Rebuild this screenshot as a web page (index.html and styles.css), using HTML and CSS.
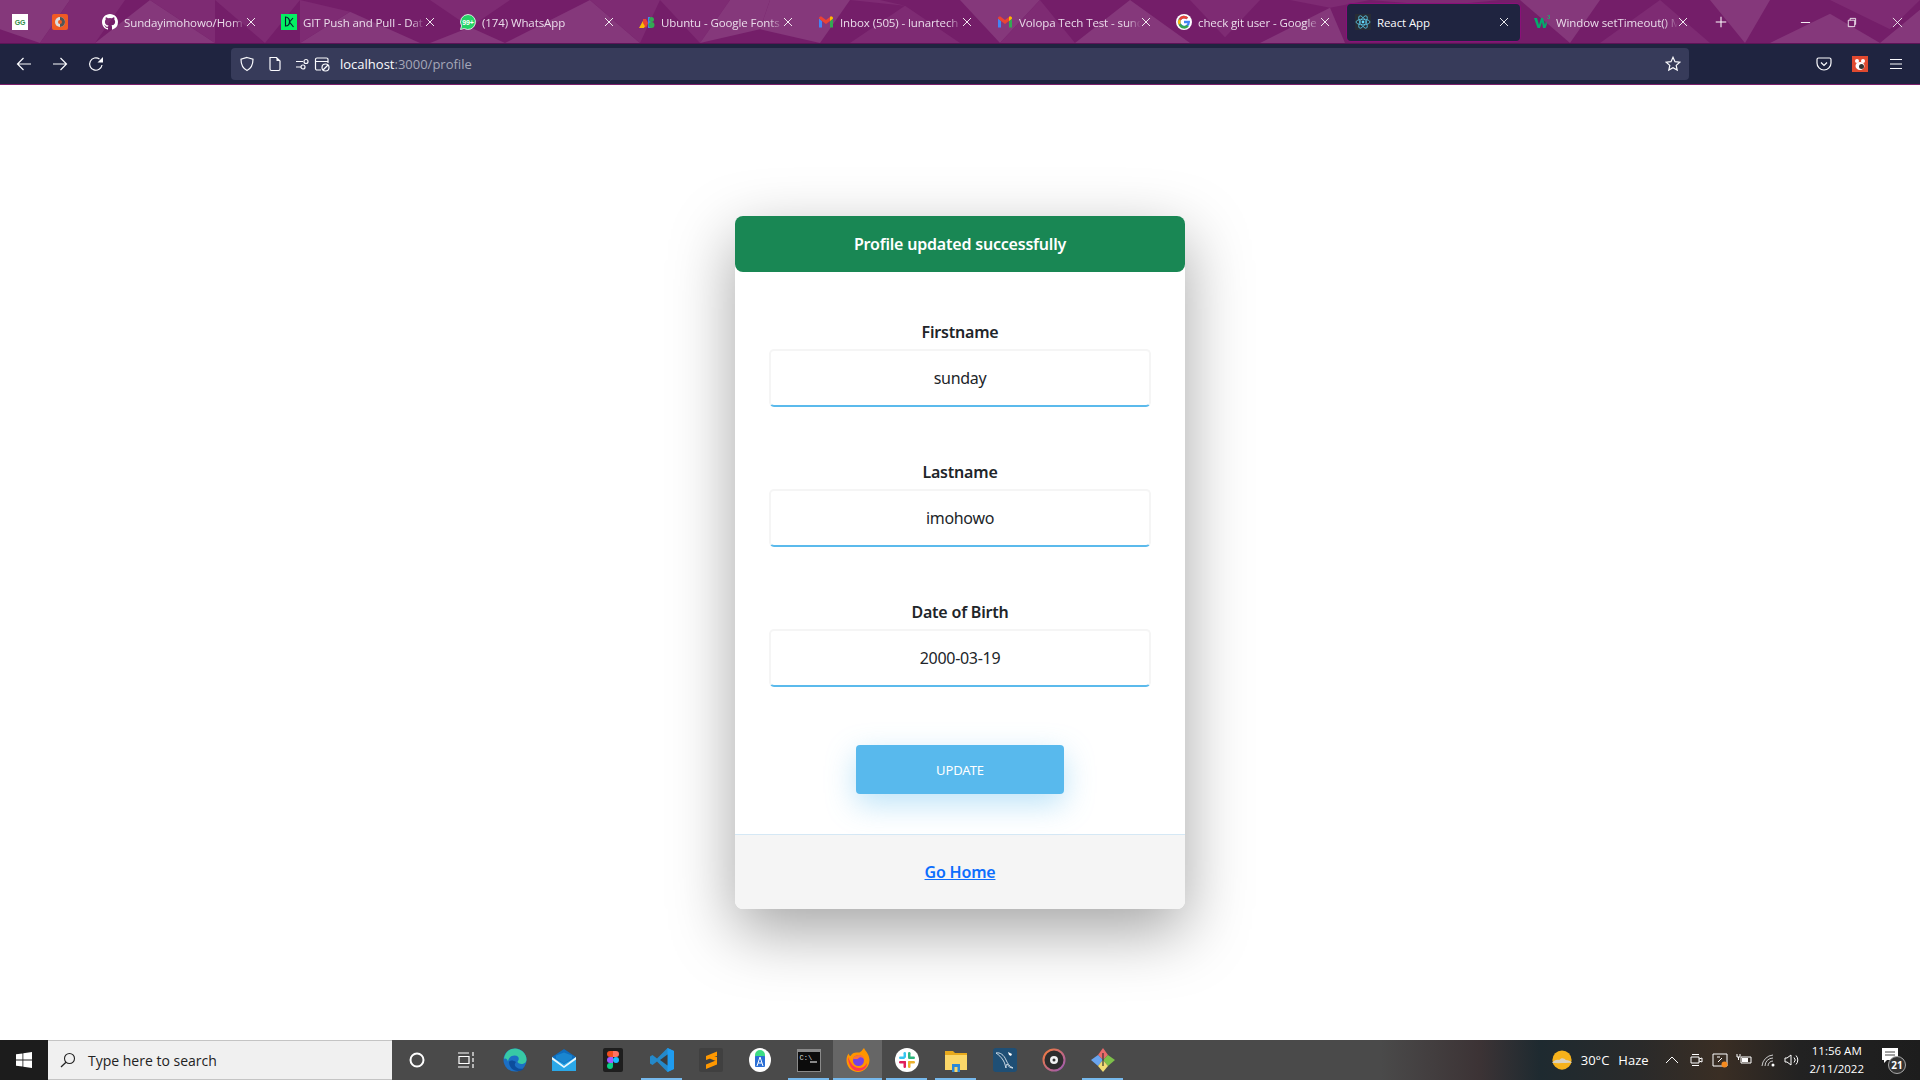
FILE: index.html
```html
<!DOCTYPE html>
<html>
<head>
    <title>React App</title>
    <link rel="stylesheet" href="styles.css">
</head>
<body>
    <svg class="sprites" width="0" height="0">
        <symbol id="tab-close" viewBox="0 0 10 10"><path d="M1 1l8 8M9 1L1 9" stroke="#fff" stroke-width=".9"/></symbol>
    </svg>
    <header class="browser">
        <div class="tabbar">
            <svg class="tabbar-art" viewBox="0 0 1920 44" preserveAspectRatio="none">
                <polygon class="lt" points="0,0 70,0 40,44 0,30"/>
                <polygon class="md" points="40,44 70,0 125,0 95,44"/>
                <polygon class="lt" points="95,44 150,0 215,44"/>
                <polygon class="md" points="150,0 215,0 215,44"/>
                <polygon class="md" points="215,0 300,0 265,44"/>
                <polygon class="lt" points="300,44 350,12 420,44"/>
                <polygon class="md" points="300,0 350,12 300,44"/>
                <polygon class="md" points="430,0 510,0 470,28"/>
                <polygon class="lt" points="430,44 470,28 505,44"/>
                <polygon class="lt" points="505,44 590,0 640,44"/>
                <polygon class="md" points="590,0 660,0 640,44"/>
                <polygon class="md" points="660,0 730,0 700,44"/>
                <polygon class="lt" points="700,44 730,0 770,0 760,30"/>
                <polygon class="lt" points="770,0 850,0 820,44 760,30"/>
                <polygon class="md" points="850,44 905,6 960,44"/>
                <polygon class="md" points="850,0 905,6 880,0"/>
                <polygon class="lt" points="960,0 1040,0 1000,44"/>
                <polygon class="md" points="1000,44 1040,0 1075,44"/>
                <polygon class="lt" points="1075,44 1130,0 1190,44"/>
                <polygon class="md" points="1190,0 1260,0 1225,38"/>
                <polygon class="lt" points="1260,44 1330,8 1345,44"/>
                <polygon class="md" points="1290,0 1370,0 1330,8"/>
                <polygon class="md" points="1370,0 1500,0 1440,6"/>
                <polygon class="lt" points="1520,0 1600,0 1570,44"/>
                <polygon class="md" points="1600,44 1660,0 1710,44"/>
                <polygon class="lt" points="1710,0 1770,0 1745,44"/>
                <polygon class="lt" points="1770,44 1830,14 1880,44"/>
                <polygon class="md" points="1830,0 1920,0 1890,30"/>
                <polygon class="lt" points="1880,44 1920,10 1920,44"/>
            </svg>
            <div class="tab tab-pinned">
                <svg class="fav" viewBox="0 0 16 16"><rect width="16" height="16" fill="#fff"/><text x="8" y="11" font-size="7" font-weight="700" text-anchor="middle" fill="#2f8d46" font-family="Liberation Sans">GG</text></svg>
            </div>
            <div class="tab tab-pinned">
                <svg class="fav" viewBox="0 0 16 16"><rect width="16" height="16" rx="2" fill="#f15a24"/><circle cx="8" cy="8" r="5" fill="#ddd"/><path d="M8 3a5 5 0 0 1 0 10z" fill="#555"/><circle cx="8" cy="8" r="2" fill="#f15a24"/></svg>
            </div>
            <div class="tab">
                <svg class="fav" viewBox="0 0 16 16"><path fill="#fff" d="M8 0C3.58 0 0 3.58 0 8c0 3.54 2.29 6.53 5.47 7.59.4.07.55-.17.55-.38v-1.34c-2.23.48-2.69-1.07-2.69-1.07-.36-.92-.89-1.17-.89-1.17-.73-.5.05-.49.05-.49.8.06 1.23.83 1.23.83.71 1.22 1.87.87 2.33.66.07-.52.28-.87.51-1.07-1.78-.2-3.64-.89-3.64-3.95 0-.87.31-1.59.82-2.15-.08-.2-.36-1.02.08-2.12 0 0 .67-.21 2.2.82a7.6 7.6 0 0 1 4 0c1.53-1.04 2.2-.82 2.2-.82.44 1.1.16 1.92.08 2.12.51.56.82 1.27.82 2.15 0 3.07-1.87 3.75-3.65 3.95.29.25.54.73.54 1.48v2.2c0 .21.15.46.55.38A8 8 0 0 0 16 8c0-4.42-3.58-8-8-8z"/></svg>
                <span class="tab-title">Sundayimohowo/Hom</span>
                <svg class="tab-x"><use href="#tab-close"/></svg>
            </div>
            <div class="tab">
                <svg class="fav" viewBox="0 0 16 16"><rect width="16" height="16" fill="#03ef62"/><path d="M4.500 3v9c3 0 4-2 4-4.500S7 3 4.500 3zM12 4L8.500 8l4 5" stroke="#05192d" stroke-width="1.100" fill="none"/></svg>
                <span class="tab-title">GIT Push and Pull - Dat</span>
                <svg class="tab-x"><use href="#tab-close"/></svg>
            </div>
            <div class="tab">
                <svg class="fav" viewBox="0 0 16 16"><path d="M8 .5a7.500 7.500 0 0 0-6.400 11.400L.5 15.500l3.700-1A7.500 7.500 0 1 0 8 .5z" fill="#25d366" stroke="#fff" stroke-width=".8"/><text x="8" y="10.500" font-size="7" font-weight="700" text-anchor="middle" fill="#fff" font-family="Liberation Sans">99+</text></svg>
                <span class="tab-title">(174) WhatsApp</span>
                <svg class="tab-x"><use href="#tab-close"/></svg>
            </div>
            <div class="tab">
                <svg class="fav" viewBox="0 0 16 16"><path d="M0 14L5 5l3 4-3 5z" fill="#fbbc04"/><path d="M5 5h3l2 4-2 5-3-5z" fill="#ea4335" transform="translate(-1)"/><path d="M9 3h2l2 11H9z" fill="#4285f4"/><circle cx="12.500" cy="5.500" r="2.500" fill="#34a853"/><circle cx="12.500" cy="11" r="3" fill="#34a853"/></svg>
                <span class="tab-title">Ubuntu - Google Fonts</span>
                <svg class="tab-x"><use href="#tab-close"/></svg>
            </div>
            <div class="tab">
                <svg class="fav" viewBox="0 0 16 16"><use href="#gmail"/></svg>
                <span class="tab-title">Inbox (505) - lunartech</span>
                <svg class="tab-x"><use href="#tab-close"/></svg>
            </div>
            <div class="tab">
                <svg class="fav" viewBox="0 0 16 16">
                    <g id="gmail">
                        <path d="M1 4.500V13.500h3V7z" fill="#4285f4"/>
                        <path d="M12 7v6.500h3V4.500z" fill="#34a853"/>
                        <path d="M1 4.500C1 2.500 3 2 4 3l4 3 4-3c1-1 3-.5 3 1.500L12 7 8 10 4 7z" fill="#ea4335"/>
                        <path d="M12 3l-0 4 3-2.500C15 2.500 13 2 12 3z" fill="#fbbc04"/>
                    </g>
                </svg>
                <span class="tab-title">Volopa Tech Test - sund</span>
                <svg class="tab-x"><use href="#tab-close"/></svg>
            </div>
            <div class="tab">
                <svg class="fav" viewBox="0 0 16 16"><circle cx="8" cy="8" r="8" fill="#fff"/><path d="M8 6.800v2.500h3.500A3.600 3.600 0 1 1 10.400 5.300l1.800-1.800A6.100 6.100 0 1 0 14 8c0-.4 0-.8-.1-1.200z" fill="#4285f4"/><path d="M2.700 5A6 6 0 0 1 12.200 3.500l-1.800 1.800A3.600 3.600 0 0 0 4.800 6.500z" fill="#ea4335"/><path d="M2.700 5l2.100 1.500a3.600 3.600 0 0 0 0 3L2.700 11a6 6 0 0 1 0-6z" fill="#fbbc04"/><path d="M2.700 11l2.100-1.500a3.600 3.600 0 0 0 6 1.400l2 1.600A6 6 0 0 1 2.700 11z" fill="#34a853"/></svg>
                <span class="tab-title">check git user - Google</span>
                <svg class="tab-x"><use href="#tab-close"/></svg>
            </div>
            <div class="tab tab-active">
                <svg class="fav" viewBox="0 0 16 16"><rect width="16" height="16" fill="#282c34"/><g fill="none" stroke="#61dafb" stroke-width=".7"><ellipse cx="8" cy="8" rx="7" ry="2.800"/><ellipse cx="8" cy="8" rx="7" ry="2.800" transform="rotate(60 8 8)"/><ellipse cx="8" cy="8" rx="7" ry="2.800" transform="rotate(120 8 8)"/></g><circle cx="8" cy="8" r="1.400" fill="#61dafb"/></svg>
                <span class="tab-title">React App</span>
                <svg class="tab-x"><use href="#tab-close"/></svg>
            </div>
            <div class="tab">
                <svg class="fav" viewBox="0 0 16 16"><path d="M0 4h3l2 7 2-7h2l2 7 1-4 1 3-1.500 4h-2.500L8 8l-2 6H3.500z" fill="#04aa6d"/><text x="13.500" y="5" font-size="5.500" font-weight="700" fill="#04aa6d" font-family="Liberation Sans">3</text></svg>
                <span class="tab-title">Window setTimeout() M</span>
                <svg class="tab-x"><use href="#tab-close"/></svg>
            </div>
            <span class="tab-new">
                <svg viewBox="0 0 16 16"><path d="M8 2v12M2 8h12" stroke="#fff" stroke-width="1.200"/></svg>
            </span>
            <div class="win-controls">
                <svg viewBox="0 0 12 12"><path d="M1 6h10" stroke="#fff"/></svg>
                <svg viewBox="0 0 12 12"><path d="M2.500 3.500h7v7h-7zM4.500 3.500v-2h6v6.500h-1" stroke="#fff" fill="none" stroke-width=".9"/></svg>
                <svg viewBox="0 0 12 12"><path d="M1 1l10 10M11 1L1 11" stroke="#fff" stroke-width=".9"/></svg>
            </div>
        </div>
        <nav class="toolbar">
            <svg class="tool-btn" viewBox="0 0 16 16"><path d="M15 8H1.500M7.500 2L1.500 8l6 6" class="ln"/></svg>
            <svg class="tool-btn" viewBox="0 0 16 16"><path d="M1 8h13.500M8.500 2l6 6-6 6" class="ln"/></svg>
            <svg class="tool-btn" viewBox="0 0 16 16"><path d="M14 9A6.200 6.200 0 1 1 11.500 3" class="ln"/><path d="M15 1v5.500H9.500z" fill="#fbfbfe"/></svg>
            <div class="urlbar">
                <svg class="url-icon" viewBox="0 0 16 16"><path d="M8 1.500l6 1.800c0 5-1.500 9-6 11.200-4.500-2.200-6-6.200-6-11.200z" class="ln"/></svg>
                <svg class="url-icon" viewBox="0 0 16 16"><path d="M3 1.500h6.500l3.500 3.500v8a1.500 1.500 0 0 1-1.500 1.500h-7A1.500 1.500 0 0 1 3 13z" class="ln"/><path d="M9.500 1.500V5H13z" fill="#fbfbfe"/></svg>
                <svg class="url-icon url-icon-tight" viewBox="0 0 16 16"><path d="M1 5.500h7M1 11h5" class="ln"/><circle cx="11" cy="5.500" r="2" class="ln"/><circle cx="8" cy="11" r="2" class="ln"/></svg>
                <svg class="url-icon" viewBox="0 0 16 16"><path d="M7 14H3a1.500 1.500 0 0 1-1.500-1.500v-9A1.500 1.500 0 0 1 3 2h9.500A1.500 1.500 0 0 1 14 3.500V7M1.500 5.500H14" class="ln"/><circle cx="11.500" cy="11.500" r="3.500" class="ln"/><path d="M9 14l5-5" class="ln"/></svg>
                <span class="url-text">localhost<span class="url-dim">:3000/profile</span></span>
                <svg class="url-star" viewBox="0 0 16 16"><path d="M8 1.300l2 4.400 4.800.5-3.600 3.200 1 4.700L8 11.700l-4.200 2.400 1-4.700L1.200 6.200 6 5.700z" class="ln"/></svg>
            </div>
            <div class="toolbar-right">
                <svg class="tool-btn" viewBox="0 0 16 16"><path d="M2.500 2h11A1.500 1.500 0 0 1 15 3.500V7A7 7 0 0 1 1 7V3.500A1.500 1.500 0 0 1 2.500 2z" class="ln"/><path d="M5 6.500L8 9.500l3-3" class="ln"/></svg>
                <svg class="tool-btn" viewBox="0 0 16 16"><rect width="16" height="16" fill="#e0492f"/><circle cx="5" cy="5" r="2" fill="#fff"/><circle cx="11" cy="5" r="2" fill="#fff"/><ellipse cx="8" cy="10" rx="4.500" ry="4" fill="#fff"/><circle cx="9.500" cy="10.500" r="2.500" fill="#333"/></svg>
                <svg class="tool-btn" viewBox="0 0 16 16"><path d="M2 3.500h12M2 8h12M2 12.500h12" class="ln"/></svg>
            </div>
        </nav>
    </header>

    <main class="page">
        <div class="card">
            <div class="alert">Profile updated successfully</div>
            <form class="profile-form">
                <div class="field">
                    <label class="field-label">Firstname</label>
                    <input class="field-input" type="text" value="sunday">
                </div>
                <div class="field">
                    <label class="field-label">Lastname</label>
                    <input class="field-input" type="text" value="imohowo">
                </div>
                <div class="field">
                    <label class="field-label">Date of Birth</label>
                    <input class="field-input" type="text" value="2000-03-19">
                </div>
                <button class="update-btn" type="button">UPDATE</button>
            </form>
            <div class="card-footer"><a class="home-link" href="#">Go Home</a></div>
        </div>
    </main>

    <footer class="taskbar">
        <div class="start">
            <svg viewBox="0 0 16 16"><path d="M0 2.300l6.500-.9v6.200H0zM7.300 1.300L16 0v7.600H7.300zM0 8.400h6.500v6.200L0 13.700zM7.300 8.400H16V16l-8.700-1.200z" fill="#fff"/></svg>
        </div>
        <div class="search">
            <svg viewBox="0 0 16 16"><circle cx="9.500" cy="6.500" r="5" fill="none" stroke="#222" stroke-width="1.100"/><path d="M6 10.200L1 15" stroke="#222" stroke-width="1.300"/></svg>
            <span>Type here to search</span>
        </div>
        <div class="task-icons">
            <div class="task-item"><svg viewBox="0 0 24 24"><circle cx="12" cy="12" r="6.500" fill="none" stroke="#fff" stroke-width="2"/></svg></div>
            <div class="task-item"><svg viewBox="0 0 24 24"><path d="M4 5h11M4 19h11M5 8.500h10v7H5zM19 4v4M19 10v4M19 16v4" stroke="#fff" stroke-width="1.200" fill="none"/></svg></div>
            <div class="task-item"><svg viewBox="0 0 24 24"><circle cx="12" cy="12" r="11.500" fill="#1b6fc4"/><path d="M1 11C2 3 8 .5 12 .5c6 0 11.500 5 11.500 11 0 3-2.500 4.500-5 4.500-2 0-4-1-4-2.500 2-1.500 2-6-3-6-4 0-6 3-6.500 6C4 11 3 10 1 11z" fill="#38c9a5"/><path d="M6 14c0 5 4 9 9 9 3 0 5-1 7-3-3 1.500-7 1-9-1-2-2-1-4 0-5-3-2-6-2-7 0z" fill="#0c4d9c"/></svg></div>
            <div class="task-item"><svg viewBox="0 0 24 24"><path d="M0 9h24v14H0z" fill="#2aa8e8"/><path d="M0 9L12 1l12 8-12 7z" fill="#0f6cbd"/><path d="M4 7.500l8-3 8 3v3l-8 5-8-5z" fill="#1a86d0"/><path d="M0 9l12 9 12-9v2.500L12 20 0 11.500z" fill="#eaf7fd"/></svg></div>
            <div class="task-item"><svg viewBox="0 0 24 24"><rect x="2" y="0" width="20" height="24" rx="2" fill="#1e1e1e"/><circle cx="15" cy="12" r="3" fill="#1abcfe"/><path d="M9 3h3v6H9a3 3 0 0 1 0-6z" fill="#f24e1e"/><path d="M12 3h3a3 3 0 0 1 0 6h-3z" fill="#ff7262"/><path d="M9 9h3v6H9a3 3 0 0 1 0-6z" fill="#a259ff"/><path d="M9 15h3v3a3 3 0 1 1-3-3z" fill="#0acf83"/></svg></div>
            <div class="task-item task-on"><svg viewBox="0 0 24 24"><path d="M17.500 0L24 3v18l-6.500 3L7 13.500 2.500 17 0 15.500V8.500L2.500 7 7 10.500z" fill="#2489ca"/><path d="M17.500 0L24 3v18l-6.500 3z" fill="#1f9cf0"/><path d="M17.500 6.500L10 12l7.500 5.500z" fill="#3c3c3c"/></svg></div>
            <div class="task-item"><svg viewBox="0 0 24 24"><rect width="24" height="24" rx="2" fill="#404040"/><path d="M18 3.500v4.500L7 12V8zM18 9v4.500L7 9zM18 12v4.500L7 21v-4.500z" fill="#ff9800"/></svg></div>
            <div class="task-item"><svg viewBox="0 0 24 24"><ellipse cx="12" cy="12" rx="11" ry="12" fill="#fff"/><path d="M7 7a5 5 0 0 1 10 0v2H7z" fill="#3ddc84"/><rect x="7" y="8" width="10" height="11" rx="1" fill="#2b6fd6"/><path d="M12 9l-3 9M12 9l3 9M10 15h4" stroke="#fff" fill="none"/></svg></div>
            <div class="task-item task-on"><svg viewBox="0 0 24 24"><rect y="1" width="24" height="23" fill="#8a8a8a"/><rect x="1" y="4" width="22" height="19" fill="#0c0c0c"/><text x="2.500" y="12" font-size="7" fill="#ddd" font-family="Liberation Mono">C:\</text><path d="M13 14h7" stroke="#ddd" stroke-width="1.200"/></svg></div>
            <div class="task-item task-on task-active"><svg viewBox="0 0 24 24"><path d="M18 0c1 3 5 5 5.500 12 0 6-5 12-11.500 12S.5 19 .5 12c0-3 1-5 2-6.500C3 7 3.500 8 4.500 8 6 5 9 4 12 4.500 15 5 16 2 18 0z" fill="#ff9500"/><path d="M2 9c0 7 4 14 10 14s9-4 9-8c-2 4-5 5-8 5-5 0-8-4-11-11z" fill="#ff3750"/><circle cx="12.500" cy="12.500" r="5.500" fill="#7542e5"/><path d="M7 11c1-3 4-4 6-4 4 0 5.500 3 5.500 5-1-2-3-3-5-2.500l-2 1.500z" fill="#ff7139"/></svg></div>
            <div class="task-item task-on"><svg viewBox="0 0 24 24"><circle cx="12" cy="12" r="12" fill="#fff"/><rect x="8.500" y="4" width="2.500" height="6" rx="1.200" fill="#36c5f0"/><rect x="4" y="8.500" width="6" height="2.500" rx="1.200" fill="#36c5f0"/><rect x="13" y="4" width="2.500" height="6" rx="1.200" fill="#2eb67d"/><rect x="13" y="8.500" width="7" height="2.500" rx="1.200" fill="#2eb67d"/><rect x="13" y="13" width="2.500" height="7" rx="1.200" fill="#ecb22e"/><rect x="13" y="13" width="7" height="2.500" rx="1.200" fill="#ecb22e"/><rect x="8.500" y="13" width="2.500" height="7" rx="1.200" fill="#e01e5a"/><rect x="4" y="13" width="7" height="2.500" rx="1.200" fill="#e01e5a"/></svg></div>
            <div class="task-item task-on"><svg viewBox="0 0 24 24"><path d="M1 3h8l2 2h12v17H1z" fill="#e8a91c"/><rect x="1" y="7" width="22" height="15" fill="#fbd769"/><rect x="8" y="16" width="8" height="8" fill="#2b88d8"/><rect x="10.500" y="19" width="3" height="5" fill="#fbd769"/></svg></div>
            <div class="task-item"><svg viewBox="0 0 24 24"><rect width="24" height="24" rx="3" fill="#1f4f75"/><path d="M3 5c4-1 8 2 10 7 2 4 3 6 7 8-3 0-5-2-6-4-1 2-1 3-1 4-1-3-1-5-3-8C8 9 6 7 3 5z" fill="none" stroke="#dce6ee" stroke-width=".9"/><path d="M15 4l4 2-1 2-2-1z" fill="#fff"/></svg></div>
            <div class="task-item"><svg viewBox="0 0 24 24"><defs><linearGradient id="ringc" x1="0" y1="0" x2="1" y2="1"><stop offset="0" stop-color="#f57c3a"/><stop offset="1" stop-color="#9b59b6"/></linearGradient></defs><circle cx="12" cy="12" r="10.500" fill="#2d2d2d" stroke="url(#ringc)" stroke-width="2"/><circle cx="12" cy="12" r="4" fill="#f2f2f2"/><circle cx="12" cy="12" r="1.500" fill="#333"/></svg></div>
            <div class="task-item task-on"><svg viewBox="0 0 24 24"><path d="M12 0l5 7-5 5-5-5z" fill="#e86a6a"/><path d="M17 7l7 5-7 6-5-6z" fill="#7dbf4a"/><path d="M7 7l5 5-5 6-7-6z" fill="#6aa5f0"/><path d="M7 18l5-6 5 6-5 6z" fill="#f2dc74"/><path d="M12 5v13" stroke="#333" stroke-width="1.200"/></svg></div>
        </div>
        <div class="tray">
            <svg class="weather" viewBox="0 0 24 24"><circle cx="12" cy="12" r="10.500" fill="#f6b21b"/><path d="M1 15c3-3 5-4 8-3 2-3 6-2 7 0 3 0 5 1 7 3-6 0-16 1-22 0z" fill="#d9d2c0"/></svg>
            <span class="tray-text">30°C</span>
            <span class="tray-text tray-haze">Haze</span>
            <svg class="tray-icon" viewBox="0 0 16 16"><path d="M2 11l6-6 6 6" stroke="#fff" fill="none"/></svg>
            <svg class="tray-icon" viewBox="0 0 16 16"><path d="M4 2.500h7M4 13.500h7M3 5h8v6H3zM11 7l3-1v4l-3-1" stroke="#fff" fill="none"/></svg>
            <svg class="tray-icon" viewBox="0 0 16 16"><path d="M1 2h14v12H1z" stroke="#fff" fill="none"/><path d="M6 10l4-4M5 5h3" stroke="#fff"/><circle cx="12.500" cy="12.500" r="3" fill="#f58a1f"/></svg>
            <svg class="tray-icon" viewBox="0 0 16 16"><path d="M1 2v3h3V2M2.500 5v3M5 5h10v6H5z" stroke="#fff" fill="none"/><rect x="6" y="6" width="6" height="4" fill="#fff"/></svg>
            <svg class="tray-icon" viewBox="0 0 16 16"><path d="M2 14A12 12 0 0 1 13 3M5 14a8 8 0 0 1 8-8M8 14a5 5 0 0 1 5-5" stroke="#ccc" fill="none"/><circle cx="13" cy="13" r="1.500" fill="#fff"/></svg>
            <svg class="tray-icon" viewBox="0 0 16 16"><path d="M1 6v4h2l4 3V3L3 6zM10 5.500a3.500 3.500 0 0 1 0 5M12 3.500a6.500 6.500 0 0 1 0 9" stroke="#fff" fill="none"/></svg>
            <div class="clock"><span>11:56 AM</span><span>2/11/2022</span></div>
            <div class="notify">
                <svg viewBox="0 0 16 16"><path d="M0 0h16v12H5l-3 3v-3H0z" fill="#fff"/><path d="M3 4h10M3 7h10" stroke="#444"/></svg>
                <span class="notify-badge">21</span>
            </div>
        </div>
    </footer>
</body>
</html>
```

FILE: styles.css
```css
html, body {
    height: 100%;
}

body {
    margin: 0;
    display: flex;
    flex-direction: column;
    overflow: hidden;
    background-color: white;
    font-family: "Noto Sans", "Open Sans", sans-serif;
}

svg {
    display: block;
}

.sprites {
    position: absolute;
}

.ln {
    fill: none;
    stroke: #fbfbfe;
    stroke-width: 1.2;
}

/* browser chrome */
.tabbar {
    position: relative;
    display: flex;
    align-items: center;
    height: 44px;
    padding: 1px 0 0 4px;
    box-sizing: border-box;
    border-bottom: 1px solid #5d1458;
    background-color: #741e69;
    font-family: "Open Sans", sans-serif;
    font-size: 11.5px;
    letter-spacing: -0.1px;
    color: #eadcea;
}

.tabbar > * {
    position: relative;
}

.tabbar .tabbar-art {
    position: absolute;
    left: 0;
    top: 0;
    width: 100%;
    height: 100%;
}

.lt {
    fill: #85387b;
}

.md {
    fill: #7e2b73;
}

.tab {
    display: flex;
    align-items: center;
    flex: none;
    width: 173px;
    height: 37px;
    margin-right: 6px;
    padding: 0 8px;
    box-sizing: border-box;
    border-radius: 4px;
}

.tab-pinned {
    width: 36px;
    margin-right: 4px;
}

.tab-pinned + .tab:not(.tab-pinned) {
    margin-left: 10px;
}

.tab-active {
    background-color: #1f2440;
    color: #fbfbfe;
    box-shadow: 0 0 0 1px #8a0f7a;
}

.fav {
    flex: none;
    width: 16px;
    height: 16px;
    margin-right: 6px;
}

.tab-title {
    flex: 1;
    min-width: 0;
    overflow: hidden;
    white-space: nowrap;
    -webkit-mask-image: linear-gradient(to left, transparent, black 14px);
    mask-image: linear-gradient(to left, transparent, black 14px);
}

.tab-active .tab-title {
    -webkit-mask-image: none;
    mask-image: none;
}

.tab-x {
    flex: none;
    width: 10px;
    height: 10px;
    margin: 0 3px 0 0;
}

.tab-new svg {
    width: 14px;
    height: 14px;
    margin-left: 9px;
}

.win-controls {
    display: flex;
    gap: 35px;
    margin-left: auto;
    padding-right: 17px;
}

.win-controls svg {
    width: 11px;
    height: 11px;
}

.toolbar {
    display: flex;
    align-items: center;
    height: 41px;
    box-sizing: border-box;
    padding-left: 16px;
    background-color: #1f2440;
    border-bottom: 1px solid #7a1f6b;
}

.tool-btn {
    flex: none;
    width: 16px;
    height: 16px;
    margin-right: 20px;
}

.urlbar {
    display: flex;
    align-items: center;
    flex: none;
    width: 1458px;
    height: 32px;
    margin-left: 107px;
    padding: 0 8px;
    box-sizing: border-box;
    border-radius: 4px;
    background-color: #373b5a;
    font-family: "Open Sans", sans-serif;
    font-size: 13px;
}

.url-icon {
    flex: none;
    width: 16px;
    height: 16px;
    margin-right: 12px;
}

.url-icon-tight {
    margin-right: 3px;
}

.url-text {
    color: #fbfbfe;
    margin-left: -2px;
}

.url-dim {
    color: #a5a7b8;
}

.url-star {
    width: 16px;
    height: 16px;
    margin-left: auto;
}

.toolbar-right {
    display: flex;
    margin-left: 127px;
}

/* profile card */
.page {
    flex: 1;
    display: flex;
    justify-content: center;
    align-items: flex-start;
    padding-top: 131px;
    min-height: 0;
}

.card {
    width: 450px;
    border-radius: 8px;
    background-color: white;
    box-shadow: 0 22px 64px rgba(0, 0, 0, 0.36);
    letter-spacing: -0.2px;
}

.alert {
    height: 56px;
    line-height: 56px;
    border-radius: 8px;
    background-color: #198754;
    color: white;
    font-size: 16px;
    font-weight: 600;
    text-align: center;
}

.profile-form {
    display: flex;
    flex-direction: column;
    align-items: center;
    padding: 48px 34px 40px;
}

.field {
    width: 100%;
    margin-bottom: 53px;
    text-align: center;
}

.field-label {
    display: block;
    margin-bottom: 5px;
    line-height: 24px;
    font-size: 16px;
    font-weight: 600;
    color: #212529;
}

.field-input {
    display: block;
    width: 100%;
    height: 58px;
    box-sizing: border-box;
    border: 2px solid #f5f5f5;
    border-bottom-color: #5bbaec;
    border-radius: 5px;
    outline: none;
    font-family: inherit;
    font-size: 16px;
    letter-spacing: -0.3px;
    text-align: center;
    color: #212529;
}

.update-btn {
    width: 208px;
    height: 49px;
    margin-top: 5px;
    padding-top: 2px;
    border: none;
    border-radius: 4px;
    background-color: #58b9ed;
    box-shadow: 0 10px 30px rgba(88, 185, 237, 0.4);
    font-family: inherit;
    font-size: 13px;
    letter-spacing: -0.1px;
    color: white;
}

.card-footer {
    height: 75px;
    box-sizing: border-box;
    border-top: 1px solid #d5e8f5;
    border-radius: 0 0 8px 8px;
    background-color: #f5f5f5;
    line-height: 74px;
    text-align: center;
}

.home-link {
    font-size: 16px;
    font-weight: 600;
    color: #0d6efd;
}

/* windows taskbar */
.taskbar {
    display: flex;
    align-items: stretch;
    flex: none;
    height: 40px;
    background: linear-gradient(to right, #4a4a4a 0, #4a4a4a 1380px, #3c3335 1480px, #1e2a30 1540px, #2a2a2a 1640px, #3a2e24 1720px, #222 1800px, #1d1d1d 100%);
    font-family: "Open Sans", sans-serif;
    color: white;
}

.start {
    display: flex;
    align-items: center;
    justify-content: center;
    width: 48px;
    background-color: #1c1c1c;
}

.start svg {
    width: 16px;
    height: 16px;
}

.search {
    display: flex;
    align-items: center;
    gap: 12px;
    width: 344px;
    padding-left: 12px;
    box-sizing: border-box;
    border-top: 1px solid #c4c4c4;
    border-bottom: 1px solid #c4c4c4;
    background-color: #f0f0f0;
    font-size: 14px;
    color: #222;
}

.search svg {
    width: 16px;
    height: 16px;
}

.task-icons {
    display: flex;
}

.task-item {
    display: flex;
    align-items: center;
    justify-content: center;
    position: relative;
    width: 49px;
}

.task-item svg {
    width: 24px;
    height: 24px;
}

.task-on::after {
    content: "";
    position: absolute;
    left: 4px;
    right: 4px;
    bottom: 0;
    height: 2px;
    background-color: #76b9ed;
}

.task-active {
    background-color: #666;
}

.task-active::after {
    left: 0;
    right: 0;
}

.tray {
    display: flex;
    align-items: center;
    margin-left: auto;
}

.weather {
    width: 22px;
    height: 22px;
    margin-right: 8px;
}

.tray-text {
    font-size: 13px;
    margin-right: 9px;
}

.tray-haze {
    margin-right: 15px;
}

.tray-icon {
    width: 16px;
    height: 16px;
    margin-right: 8px;
}

.clock {
    display: flex;
    flex-direction: column;
    align-items: center;
    gap: 2px;
    margin: 0 18px 0 2px;
    font-size: 11.5px;
    line-height: 16px;
}

.notify {
    position: relative;
    width: 24px;
    height: 24px;
    margin-right: 14px;
}

.notify svg {
    width: 16px;
    height: 16px;
}

.notify-badge {
    position: absolute;
    right: 0;
    bottom: -2px;
    width: 16px;
    height: 16px;
    border: 1px solid #aaa;
    border-radius: 50%;
    background-color: #333;
    font-size: 10px;
    font-weight: 700;
    line-height: 16px;
    text-align: center;
}
```
